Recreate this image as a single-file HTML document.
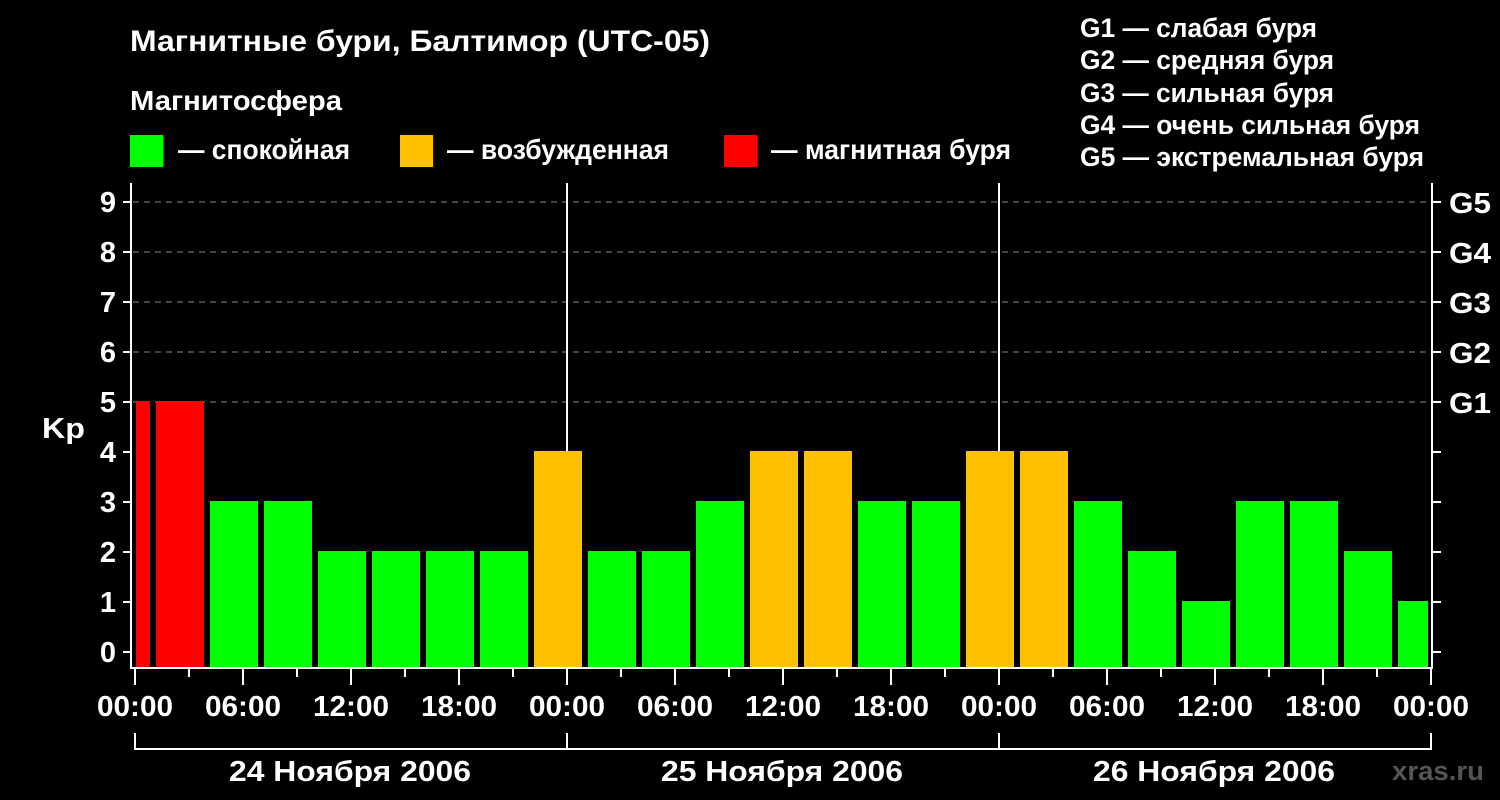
<!DOCTYPE html>
<html><head><meta charset="utf-8"><style>html,body{margin:0;padding:0;background:#000}svg{display:block}</style></head><body>
<svg width="1500" height="800" xmlns="http://www.w3.org/2000/svg" font-family="'Liberation Sans', sans-serif" font-weight="bold" fill="#fff">
<rect width="1500" height="800" fill="#000"/>
<text x="130" y="51" font-size="30" textLength="580" lengthAdjust="spacingAndGlyphs">Магнитные бури, Балтимор (UTC-05)</text>
<text x="130" y="110" font-size="28" textLength="212" lengthAdjust="spacingAndGlyphs">Магнитосфера</text>
<rect x="130" y="135" width="33" height="32" fill="#00ff00"/>
<text x="178" y="159" font-size="28" textLength="172" lengthAdjust="spacingAndGlyphs">— спокойная</text>
<rect x="400" y="135" width="33" height="32" fill="#ffc000"/>
<text x="447" y="159" font-size="28" textLength="222" lengthAdjust="spacingAndGlyphs">— возбужденная</text>
<rect x="724" y="135" width="33" height="32" fill="#ff0000"/>
<text x="771" y="159" font-size="28" textLength="240" lengthAdjust="spacingAndGlyphs">— магнитная буря</text>
<g font-size="27">
<text x="1080" y="37" textLength="237" lengthAdjust="spacingAndGlyphs">G1 — слабая буря</text>
<text x="1080" y="69" textLength="254" lengthAdjust="spacingAndGlyphs">G2 — средняя буря</text>
<text x="1080" y="102" textLength="254" lengthAdjust="spacingAndGlyphs">G3 — сильная буря</text>
<text x="1080" y="134" textLength="340" lengthAdjust="spacingAndGlyphs">G4 — очень сильная буря</text>
<text x="1080" y="166" textLength="344" lengthAdjust="spacingAndGlyphs">G5 — экстремальная буря</text>
</g>
<g stroke="#888" stroke-width="1" stroke-dasharray="6,5">
<line x1="133" y1="202" x2="1431" y2="202"/><line x1="133" y1="252" x2="1431" y2="252"/>
<line x1="133" y1="302" x2="1431" y2="302"/><line x1="133" y1="352" x2="1431" y2="352"/>
<line x1="133" y1="402" x2="1431" y2="402"/>
</g>
<g stroke="#fff" stroke-width="2">
<line x1="567" y1="183" x2="567" y2="668"/><line x1="999" y1="183" x2="999" y2="668"/>
</g>
<g>
<rect x="136" y="401" width="14" height="267" fill="#ff0000"/>
<rect x="156" y="401" width="48" height="267" fill="#ff0000"/>
<rect x="210" y="501" width="48" height="167" fill="#00ff00"/>
<rect x="264" y="501" width="48" height="167" fill="#00ff00"/>
<rect x="318" y="551" width="48" height="117" fill="#00ff00"/>
<rect x="372" y="551" width="48" height="117" fill="#00ff00"/>
<rect x="426" y="551" width="48" height="117" fill="#00ff00"/>
<rect x="480" y="551" width="48" height="117" fill="#00ff00"/>
<rect x="534" y="451" width="48" height="217" fill="#ffc000"/>
<rect x="588" y="551" width="48" height="117" fill="#00ff00"/>
<rect x="642" y="551" width="48" height="117" fill="#00ff00"/>
<rect x="696" y="501" width="48" height="167" fill="#00ff00"/>
<rect x="750" y="451" width="48" height="217" fill="#ffc000"/>
<rect x="804" y="451" width="48" height="217" fill="#ffc000"/>
<rect x="858" y="501" width="48" height="167" fill="#00ff00"/>
<rect x="912" y="501" width="48" height="167" fill="#00ff00"/>
<rect x="966" y="451" width="48" height="217" fill="#ffc000"/>
<rect x="1020" y="451" width="48" height="217" fill="#ffc000"/>
<rect x="1074" y="501" width="48" height="167" fill="#00ff00"/>
<rect x="1128" y="551" width="48" height="117" fill="#00ff00"/>
<rect x="1182" y="601" width="48" height="67" fill="#00ff00"/>
<rect x="1236" y="501" width="48" height="167" fill="#00ff00"/>
<rect x="1290" y="501" width="48" height="167" fill="#00ff00"/>
<rect x="1344" y="551" width="48" height="117" fill="#00ff00"/>
<rect x="1398" y="601" width="30" height="67" fill="#00ff00"/>
</g>
<g stroke="#fff" stroke-width="2" fill="none">
<polyline points="131,183 131,668 1432,668 1432,183"/>
</g>
<g stroke="#fff" stroke-width="2">
<line x1="123" y1="202" x2="131" y2="202"/><line x1="123" y1="252" x2="131" y2="252"/><line x1="123" y1="302" x2="131" y2="302"/>
<line x1="123" y1="352" x2="131" y2="352"/><line x1="123" y1="402" x2="131" y2="402"/><line x1="123" y1="452" x2="131" y2="452"/>
<line x1="123" y1="502" x2="131" y2="502"/><line x1="123" y1="552" x2="131" y2="552"/><line x1="123" y1="602" x2="131" y2="602"/>
<line x1="123" y1="652" x2="131" y2="652"/>
<line x1="1432" y1="202" x2="1441" y2="202"/><line x1="1432" y1="252" x2="1441" y2="252"/><line x1="1432" y1="302" x2="1441" y2="302"/>
<line x1="1432" y1="352" x2="1441" y2="352"/><line x1="1432" y1="402" x2="1441" y2="402"/><line x1="1432" y1="452" x2="1441" y2="452"/>
<line x1="1432" y1="502" x2="1441" y2="502"/><line x1="1432" y1="552" x2="1441" y2="552"/><line x1="1432" y1="602" x2="1441" y2="602"/>
<line x1="1432" y1="652" x2="1441" y2="652"/>
</g>
<g font-size="29" text-anchor="end">
<text x="116" y="212">9</text><text x="116" y="262">8</text><text x="116" y="312">7</text><text x="116" y="362">6</text>
<text x="116" y="412">5</text><text x="116" y="462">4</text><text x="116" y="512">3</text><text x="116" y="562">2</text>
<text x="116" y="612">1</text><text x="116" y="662">0</text>
</g>
<text x="42" y="438" font-size="29" textLength="43" lengthAdjust="spacingAndGlyphs">Kp</text>
<g font-size="29">
<text x="1449" y="213" textLength="42" lengthAdjust="spacingAndGlyphs">G5</text><text x="1449" y="263" textLength="42" lengthAdjust="spacingAndGlyphs">G4</text><text x="1449" y="313" textLength="42" lengthAdjust="spacingAndGlyphs">G3</text>
<text x="1449" y="363" textLength="42" lengthAdjust="spacingAndGlyphs">G2</text><text x="1449" y="413" textLength="42" lengthAdjust="spacingAndGlyphs">G1</text>
</g>
<g stroke="#fff" stroke-width="2">
<line x1="135" y1="668" x2="135" y2="685"/><line x1="189" y1="668" x2="189" y2="677"/><line x1="243" y1="668" x2="243" y2="685"/><line x1="297" y1="668" x2="297" y2="677"/>
<line x1="351" y1="668" x2="351" y2="685"/><line x1="405" y1="668" x2="405" y2="677"/><line x1="459" y1="668" x2="459" y2="685"/><line x1="513" y1="668" x2="513" y2="677"/>
<line x1="567" y1="668" x2="567" y2="685"/><line x1="621" y1="668" x2="621" y2="677"/><line x1="675" y1="668" x2="675" y2="685"/><line x1="729" y1="668" x2="729" y2="677"/>
<line x1="783" y1="668" x2="783" y2="685"/><line x1="837" y1="668" x2="837" y2="677"/><line x1="891" y1="668" x2="891" y2="685"/><line x1="945" y1="668" x2="945" y2="677"/>
<line x1="999" y1="668" x2="999" y2="685"/><line x1="1053" y1="668" x2="1053" y2="677"/><line x1="1107" y1="668" x2="1107" y2="685"/><line x1="1161" y1="668" x2="1161" y2="677"/>
<line x1="1215" y1="668" x2="1215" y2="685"/><line x1="1269" y1="668" x2="1269" y2="677"/><line x1="1323" y1="668" x2="1323" y2="685"/><line x1="1377" y1="668" x2="1377" y2="677"/>
<line x1="1431" y1="668" x2="1431" y2="685"/>
<polyline fill="none" points="135,733 135,749 1431,749 1431,733"/>
<line x1="567" y1="733" x2="567" y2="749"/><line x1="999" y1="733" x2="999" y2="749"/>
</g>
<g font-size="29" text-anchor="middle">
<text x="135" y="716" textLength="76" lengthAdjust="spacingAndGlyphs">00:00</text><text x="243" y="716" textLength="76" lengthAdjust="spacingAndGlyphs">06:00</text><text x="351" y="716" textLength="76" lengthAdjust="spacingAndGlyphs">12:00</text><text x="459" y="716" textLength="76" lengthAdjust="spacingAndGlyphs">18:00</text>
<text x="567" y="716" textLength="76" lengthAdjust="spacingAndGlyphs">00:00</text><text x="675" y="716" textLength="76" lengthAdjust="spacingAndGlyphs">06:00</text><text x="783" y="716" textLength="76" lengthAdjust="spacingAndGlyphs">12:00</text><text x="891" y="716" textLength="76" lengthAdjust="spacingAndGlyphs">18:00</text>
<text x="999" y="716" textLength="76" lengthAdjust="spacingAndGlyphs">00:00</text><text x="1107" y="716" textLength="76" lengthAdjust="spacingAndGlyphs">06:00</text><text x="1215" y="716" textLength="76" lengthAdjust="spacingAndGlyphs">12:00</text><text x="1323" y="716" textLength="76" lengthAdjust="spacingAndGlyphs">18:00</text>
<text x="1431" y="716" textLength="76" lengthAdjust="spacingAndGlyphs">00:00</text>
<text x="350" y="781" textLength="242" lengthAdjust="spacingAndGlyphs">24 Ноября 2006</text>
<text x="782" y="781" textLength="242" lengthAdjust="spacingAndGlyphs">25 Ноября 2006</text>
<text x="1214" y="781" textLength="242" lengthAdjust="spacingAndGlyphs">26 Ноября 2006</text>
</g>
<text x="1392" y="780" font-size="27" fill="#555" textLength="92" lengthAdjust="spacingAndGlyphs">xras.ru</text>
</svg>
</body></html>
